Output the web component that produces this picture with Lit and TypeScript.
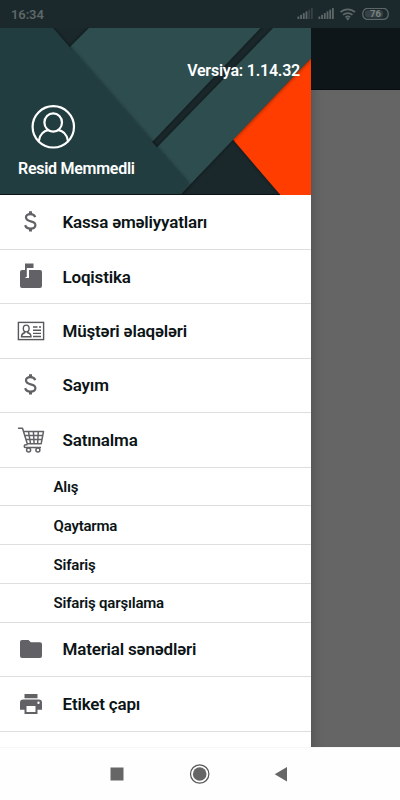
import { LitElement, html, css, svg } from "lit";
import { customElement } from "lit/decorators.js";

const icons: Record<string, unknown> = {
  dollar: svg`<path fill="none" stroke="#626166" stroke-width="2.200" d="M20.200 9.200C19.500 7.200 17.900 6.200 15.500 6.200c-2.800 0-4.500 1.400-4.500 3.400 0 5.100 9.400 2.500 9.400 7.400 0 2.300-2 3.600-4.900 3.600-2.900 0-4.700-1.200-5.300-3.500"/><path fill="#626166" d="M14 3.300h3v3h-3zM14 20.500h3v3h-3z"/>`,
  mailbox: svg`<path fill="#626166" d="M10 .5h8.500v4.500h-6V14H10z"/><path fill="#626166" d="M7 7h3V14.500h1V7zM7 7h3v8h4V7h11a2 2 0 0 1 2 2V23a2 2 0 0 1-2 2H7a2 2 0 0 1-2-2V9a2 2 0 0 1 2-2z"/><path fill="#fff" d="M11.800 5h1.900v9h-1.900z"/>`,
  card: svg`<g fill="none" stroke="#58575c" stroke-width="1.400"><rect x="3.400" y="5.400" width="25.200" height="17.200"/><ellipse cx="11.200" cy="11.500" rx="2.900" ry="3.400"/><path d="M9.700 14.500v1.200c-2.200.5-3.200 1.500-3.200 4h9.500c0-2.500-1-3.500-3.300-4v-1.200M18 10h4.500M24 10h2M18 13.200h8M18 16.400h8M18 19.500h8"/></g>`,
  cart: svg`<g fill="none" stroke="#626166" stroke-width="1.500" stroke-linejoin="round"><path d="M3 2.300h4.500L12.500 18.500M8.700 5.500h19.800l-2.300 12.200H12.500M10 9.500h17.500M11.300 13.600h15.300M13.500 5.500l2 12.200M18.400 5.500l.7 12.200M23.300 5.500L22.600 17.700M12.500 18.700h-1.800c-2 0-2 2.900 0 2.900H26"/><circle cx="13.600" cy="24" r="2"/><circle cx="22.900" cy="24" r="2"/></g>`,
  folder: svg`<path fill="#626166" d="M7 5h6.500l2.300 2.300H25a2 2 0 0 1 2 2V21a2 2 0 0 1-2 2H7a2 2 0 0 1-2-2V7a2 2 0 0 1 2-2z"/>`,
  printer: svg`<path fill="#626166" fill-rule="evenodd" d="M9.500 4h13v4.300h-13zM8.300 9.400h15.400a3.300 3.300 0 0 1 3.300 3.300v7h-4.500V24h-13v-4.300H5v-7A3.300 3.300 0 0 1 8.300 9.400zM11.500 16v6h9v-6zM23.500 11.600a1.200 1.200 0 1 0 0 2.400 1.200 1.200 0 0 0 0-2.400z"/>`,
};

interface Entry { label: string; icon?: string }

const entries: Entry[] = [
  { label: "Kassa əməliyyatları", icon: "dollar" },
  { label: "Loqistika", icon: "mailbox" },
  { label: "Müştəri əlaqələri", icon: "card" },
  { label: "Sayım", icon: "dollar" },
  { label: "Satınalma", icon: "cart" },
  { label: "Alış" },
  { label: "Qaytarma" },
  { label: "Sifariş" },
  { label: "Sifariş qarşılama" },
  { label: "Material sənədləri", icon: "folder" },
  { label: "Etiket çapı", icon: "printer" },
];

@customElement("app-root")
export class AppRoot extends LitElement {
  static styles = css`
    :host { display: flex; flex-direction: column; width: 400px; height: 800px; overflow: hidden; font-family: Roboto, sans-serif; background: #fefefe; }
    * { box-sizing: border-box; }
    svg { display: block; flex: none; }
    .status { height: 28px; flex: none; background: #1c292c; display: flex; align-items: center; justify-content: space-between; padding: 1px 11px 0; color: #5d6768; font-size: 13px; font-weight: 600; }
    .time { letter-spacing: -0.1px; }
    .body { height: 718.500px; flex: none; display: flex; }
    .drawer { width: 311px; flex: none; background: #fff; display: flex; flex-direction: column; overflow: hidden; }
    .header { height: 167px; margin-bottom: 0.400px; flex: none; position: relative; color: #fff; font-size: 16px; font-weight: 600; letter-spacing: -0.220px; display: flex; flex-direction: column; overflow: hidden; line-height: 20px; }
    .art { position: absolute; inset: 0; }
    .version { position: relative; align-self: flex-end; margin: 33px 11px 0 0; }
    .avatar { position: relative; margin: 24px 0 0 31px; }
    .name { position: relative; margin: 8.500px 0 0 18px; letter-spacing: -0.270px; }
    .row { height: 54.440px; flex: none; display: flex; align-items: center; border-bottom: 1.500px solid #dedede; padding-left: 15px; font-size: 17px; font-weight: 600; letter-spacing: -0.180px; color: #0c1416; white-space: nowrap; }
    .row svg { margin-right: 15.500px; }
    .sub { height: 38.800px; padding-left: 53.500px; font-size: 15px; padding-top: 1px; letter-spacing: -0.200px; }
    .rest { flex: 1; background: #656565; box-shadow: inset 9px 0 8px -6px #555; }
    .bar { height: 62px; background: #0e1619; border-bottom: 1px solid #080d0f; }
    .nav { flex: 1; display: flex; background: #fefefe; border-top: 1px solid #f7f7f7; }
  `;

  render() {
    const bars = (x: number, lit: number) =>
      [0, 1, 2, 3, 4, 5].map((i) => svg`<rect x=${x + i * 2.7} y=${8.5 - i * 1.7} width="1.800" height=${2.5 + i * 1.7} fill=${i < lit ? "#5d6768" : "#354144"}/>`);
    return html`
      <div class="status">
        <span class="time">16:34</span>
        <svg width="92" height="14" viewBox="0 1 92 14">
          <g transform="translate(0 1)">${bars(0.5, 4)}${bars(21.5, 6)}</g>
          <g fill="none" stroke="#5d6768" stroke-width="1.700"><path d="M43.500 5.200a10.500 10.500 0 0 1 14.500 0M46 7.900a7 7 0 0 1 9.500 0M48.400 10.300a3.600 3.600 0 0 1 4.700 0"/></g>
          <path fill="#5d6768" d="M49 11.500q1.800-1.500 3.500 0L50.800 13.500z"/>
          <rect x="65.800" y="1.400" width="25.400" height="11" rx="5" fill="none" stroke="#5d6768" stroke-width="1.300"/>
          <rect x="68" y="3.300" width="18" height="7.300" rx="3" fill="#354144"/>
          <text x="78.500" y="10.400" text-anchor="middle" font-size="9.500" font-weight="700" fill="#7c8485">76</text>
        </svg>
      </div>
      <div class="body">
        <div class="drawer">
          <div class="header">
            <svg class="art" width="311" height="167" viewBox="0 28 311 167">
              <defs><filter id="shade" x="-10%" y="-10%" width="120%" height="120%"><feDropShadow dx="0" dy="0" stdDeviation="2.200" flood-color="#000" flood-opacity=".55"/></filter></defs>
              <rect y="28" width="311" height="167" fill="#1a282c"/>
              <path filter="url(#shade)" fill="#ff3d00" d="M311 58L233 139.500 280.500 195 289 205H325V43.400z"/>
              <g fill="#2f4e50">
                <path filter="url(#shade)" d="M97 20H268L152 142 140 150 70 47z"/>
                <path filter="url(#shade)" d="M281 20H325V43.400L180 195 140 165z"/>
              </g>
              <path filter="url(#shade)" fill="#223e41" d="M-9 20H46L189.500 185 180 195 170 205H-9z"/>
              <path d="M0 194.500H280" stroke="#0b1415"/>
            </svg>
            <span class="version">Versiya: 1.14.32</span>
            <svg class="avatar" width="45" height="45" viewBox="0 0 45 45"><g fill="none" stroke="#fff" stroke-width="2.200"><circle cx="22.300" cy="21.800" r="20.700"/><ellipse cx="22.200" cy="17.500" rx="8.800" ry="9.200"/><path d="M7.800 36c1-6.500 5-10.500 10.500-11M37 36c-1-6.500-5-10.500-10.700-11"/></g></svg>
            <span class="name">Resid Memmedli</span>
          </div>
          ${entries.map((e) => e.icon
            ? html`<div class="row"><svg width="32" height="28" viewBox="0 0 32 28">${icons[e.icon]}</svg><span>${e.label}</span></div>`
            : html`<div class="row sub">${e.label}</div>`)}
        </div>
        <div class="rest"><div class="bar"></div></div>
      </div>
      <div class="nav">
        <svg width="400" height="53" viewBox="0 748 400 53">
          <rect x="110.500" y="767.500" width="13" height="13" fill="#666"/>
          <circle cx="199.700" cy="774" r="9.200" fill="none" stroke="#555" stroke-width="1.200"/>
          <circle cx="199.700" cy="774" r="6.800" fill="#666"/>
          <path d="M287 767v14.500L274.700 774.200z" fill="#666"/>
        </svg>
      </div>`;
  }
}
